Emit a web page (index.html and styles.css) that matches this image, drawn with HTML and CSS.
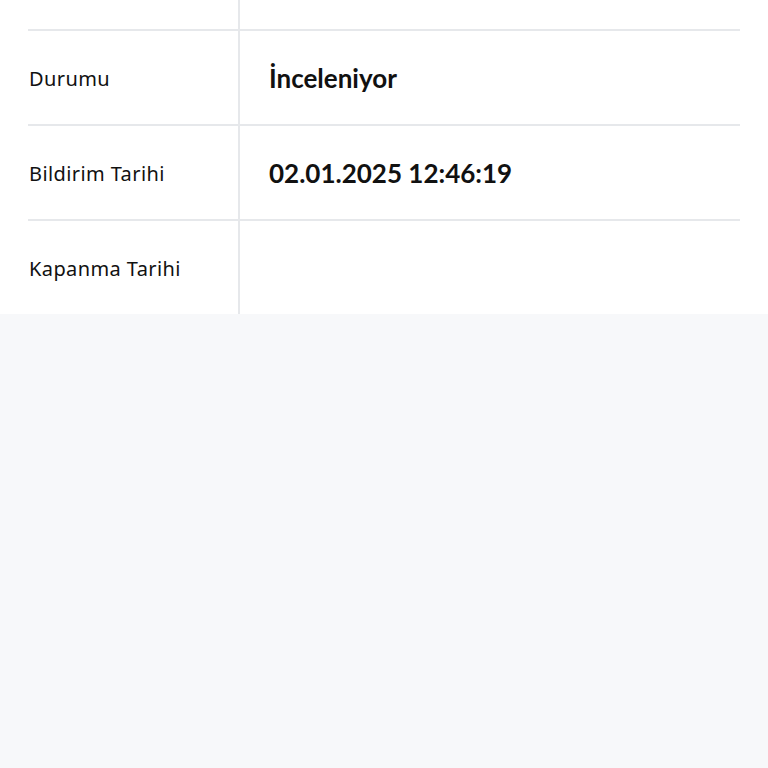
FILE: index.html
```html
<!DOCTYPE html>
<html lang="tr">
<head>
    <meta charset="UTF-8">
    <title>Bildirim Detayı</title>
    <link rel="stylesheet" href="styles.css">
</head>
<body>
<div class="detail">
    <div class="row row-top">
        <div class="label"></div>
        <div class="value"></div>
    </div>
    <div class="row">
        <div class="label">Durumu</div>
        <div class="value">İnceleniyor</div>
    </div>
    <div class="row">
        <div class="label">Bildirim Tarihi</div>
        <div class="value">02.01.2025 12:46:19</div>
    </div>
    <div class="row row-last">
        <div class="label">Kapanma Tarihi</div>
        <div class="value"></div>
    </div>
</div>
</body>
</html>
```

FILE: styles.css
```css
body {
    margin: 0;
    background-color: #f7f8fa;
    font-family: Lato, "Noto Sans", sans-serif;
    color: #111;
}
.detail {
    background: #ffffff;
    padding: 0 28px;
}
.row {
    display: grid;
    grid-template-columns: 212px 1fr;
    height: 95px;
    border-bottom: 2px solid #e6e8eb;
    box-sizing: border-box;
}
.row-top {
    height: 31px;
}
.row-last {
    height: 93px;
    border-bottom: none;
}
.label {
    display: flex;
    align-items: center;
    padding: 2px 0 0 1px;
    font-family: "Noto Sans", sans-serif;
    font-size: 20px;
    letter-spacing: 0.4px;
    border-right: 2px solid #e6e8eb;
}
.value {
    display: flex;
    align-items: center;
    padding-left: 29px;
    font-size: 26px;
    font-weight: bold;
}
```
